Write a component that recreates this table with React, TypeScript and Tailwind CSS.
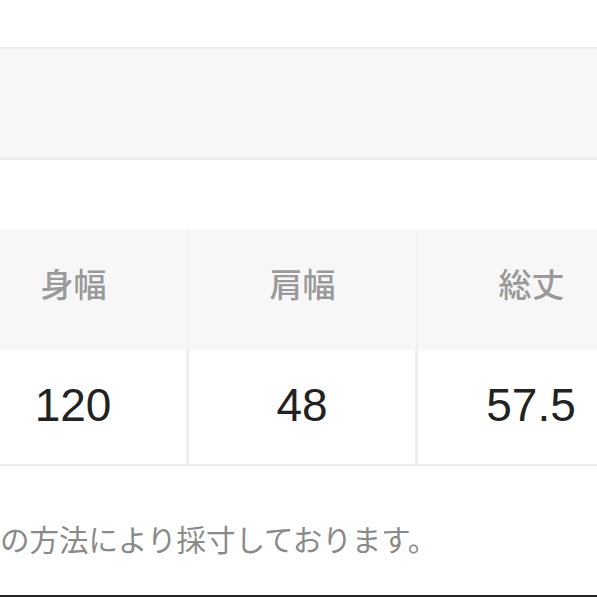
const headers = ["身幅", "肩幅", "総丈"];
const values = ["120", "48", "57.5"];

export default function App() {
  return (
    <div
      className="flex h-[597px] w-full flex-col overflow-hidden bg-white"
      style={{ fontFamily: '"Noto Sans CJK JP", "Noto Sans", sans-serif' }}
    >
      <div className="h-[47px] shrink-0" />
      <div className="h-[113px] shrink-0 border-y-2 border-[#ececec] bg-[#f7f7f7]" />
      <div className="h-[70px] shrink-0" />

      <div className="ml-[-40px] grid w-[687px] shrink-0 grid-cols-3">
        {headers.map((h) => (
          <div
            key={h}
            className="flex h-[120px] items-center justify-center border-r-2 border-[#f2f2f2] bg-[#f7f7f7] pb-[12px] text-[33px] font-medium text-[#9a9a9a]"
          >
            {h}
          </div>
        ))}
        {values.map((v) => (
          <div
            key={v}
            className="flex h-[116px] items-center justify-center border-r-[3px] border-b-2 border-[#eeeeee] pb-[4px] text-[46px] text-[#222]"
            style={{ fontFamily: '"Liberation Sans", Arial, sans-serif' }}
          >
            {v}
          </div>
        ))}
      </div>

      <p className="mt-[52px] whitespace-nowrap text-[29.5px] leading-[40px] text-[#8a8a8a]">
        の方法により採寸しております。
      </p>

      <div className="mt-auto h-[2px] shrink-0 bg-[#222]" />
    </div>
  );
}
